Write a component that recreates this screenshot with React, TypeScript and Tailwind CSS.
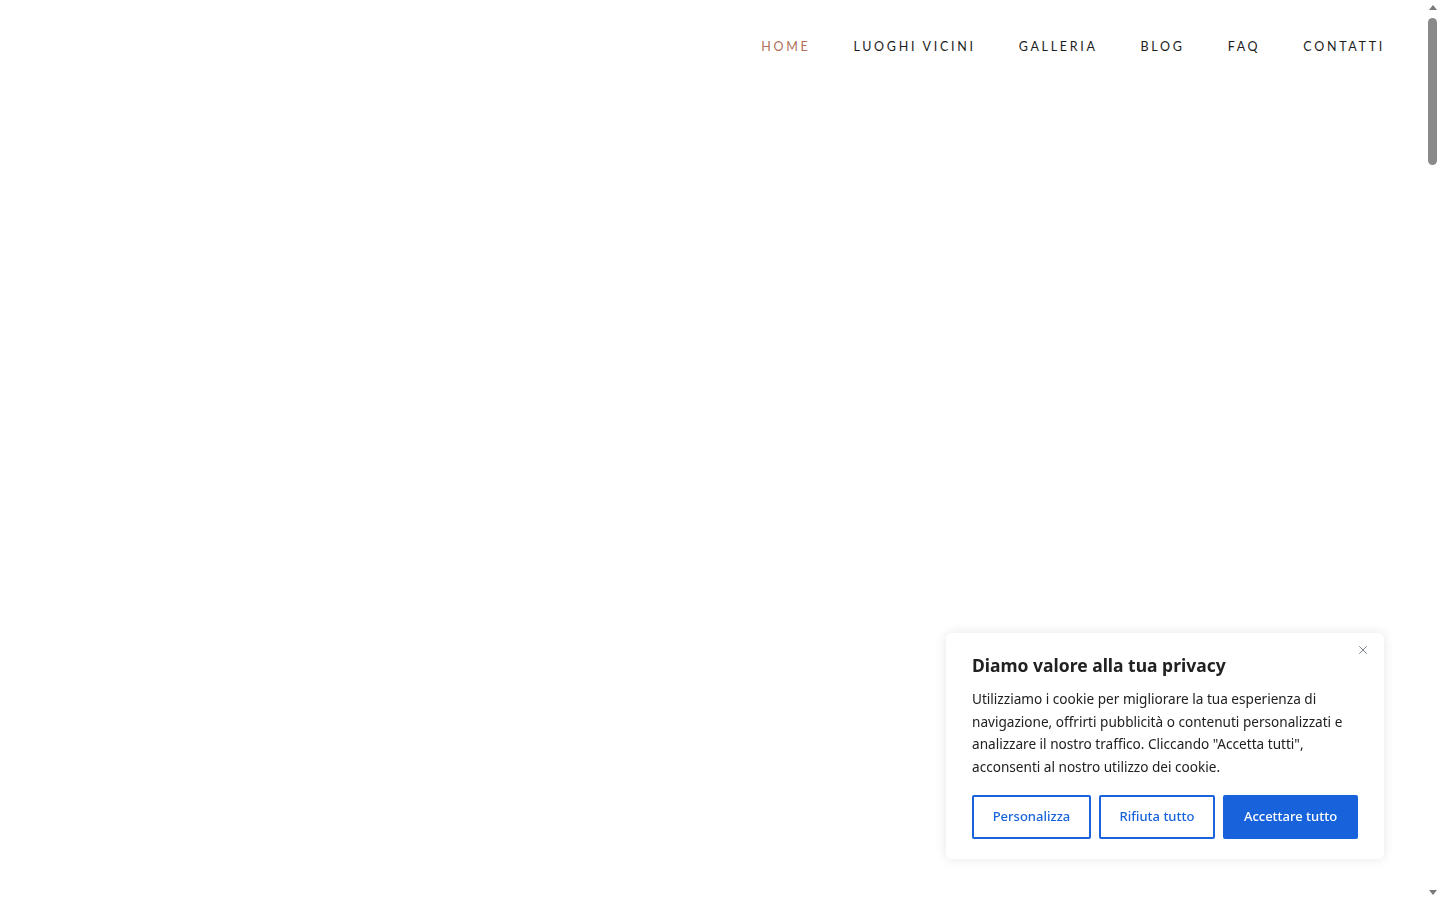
import { X } from "lucide-react";

const links = ["HOME", "LUOGHI VICINI", "GALLERIA", "BLOG", "FAQ", "CONTATTI"];

export default function App() {
  return (
    <div className="flex h-screen bg-white overflow-hidden" style={{ fontFamily: "Lato, 'Liberation Sans', sans-serif" }}>
      <main className="flex-1 relative">
        <header className="flex justify-end pt-[38px] pr-[40px]">
          <nav className="flex gap-[43px]">
            {links.map((l, i) => (
              <a
                key={l}
                href="#"
                className={`text-[12.5px] font-normal tracking-[2.7px] leading-[18px] ${i === 0 ? "text-[#b0705a]" : "text-[#1c1c1c]"}`}
              >
                {l}
              </a>
            ))}
          </nav>
        </header>

        <CookieBanner />
      </main>
      <Scrollbar />
    </div>
  );
}

function Scrollbar() {
  return (
    <aside className="w-[15px] flex flex-col items-center bg-white">
      <div className="h-[15px] flex items-center justify-center">
        <div className="w-0 h-0 border-l-[4px] border-r-[4px] border-b-[5px] border-l-transparent border-r-transparent border-b-[#7a7a7a]" />
      </div>
      <div className="flex-1 w-full flex flex-col items-center pt-[3px]">
        <div className="w-[9px] h-[147px] rounded-full bg-[#8a8a8a]" />
      </div>
      <div className="h-[15px] flex items-center justify-center">
        <div className="w-0 h-0 border-l-[4px] border-r-[4px] border-t-[5px] border-l-transparent border-r-transparent border-t-[#7a7a7a]" />
      </div>
    </aside>
  );
}

function CookieBanner() {
  return (
    <div
      className="fixed right-[56px] bottom-[41px] w-[438px] bg-white rounded-md shadow-[0_0_12px_rgba(0,0,0,0.1)] px-[26px] pt-[20px] pb-[20px]"
      style={{ fontFamily: "'Noto Sans', sans-serif" }}
    >
      <button className="absolute right-[14px] top-[10px] text-[#6b7280]">
        <X className="w-[14px] h-[14px]" strokeWidth={1.5} />
      </button>
      <h2 className="text-[17.5px] font-bold text-[#212121] leading-[24px]">Diamo valore alla tua privacy</h2>
      <p className="mt-[11px] text-[13.6px] leading-[22.5px] text-[#212121]">
        Utilizziamo i cookie per migliorare la tua esperienza di navigazione, offrirti pubblicità o contenuti personalizzati e analizzare il nostro traffico. Cliccando "Accetta tutti", acconsenti al nostro utilizzo dei cookie.
      </p>
      <div className="mt-[17px] flex gap-[8px]">
        <button className="w-[119px] h-[44px] border-2 border-[#1863dc] text-[#1863dc] text-[13px] font-medium rounded-[2px]">
          Personalizza
        </button>
        <button className="w-[116px] h-[44px] border-2 border-[#1863dc] text-[#1863dc] text-[13px] font-medium rounded-[2px]">
          Rifiuta tutto
        </button>
        <button className="w-[135px] h-[44px] bg-[#1863dc] border-2 border-[#1863dc] text-white text-[13px] font-medium rounded-[2px]">
          Accettare tutto
        </button>
      </div>
    </div>
  );
}
